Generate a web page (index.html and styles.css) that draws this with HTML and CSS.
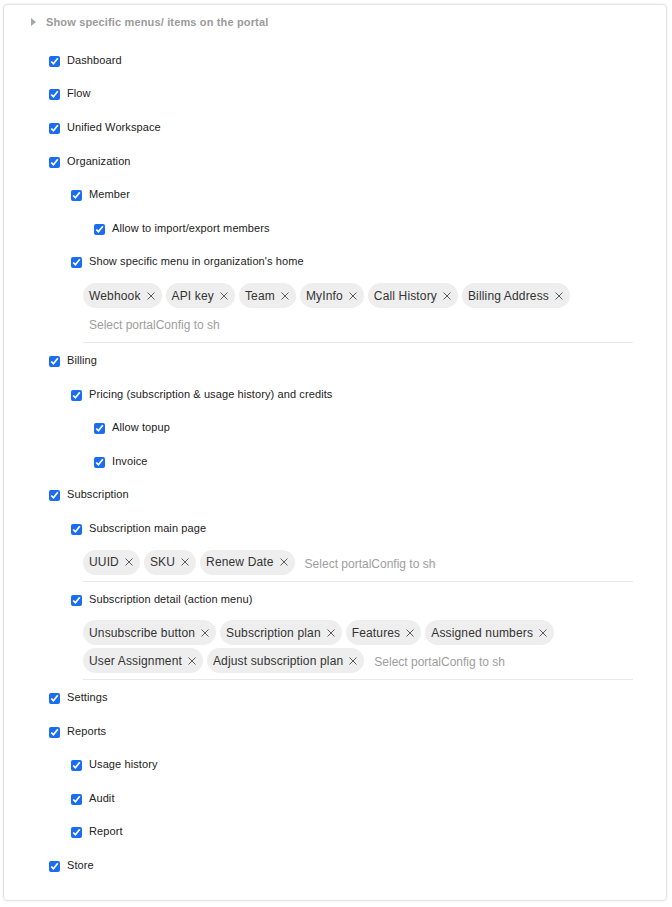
FILE: index.html
```html
<!DOCTYPE html>
<html lang="en">
<head>
  <meta charset="UTF-8">
  <meta name="viewport" content="width=device-width, initial-scale=1.0">
  <title>Portal menus</title>
  <link rel="stylesheet" href="styles.css">
</head>
<body>
<div class="panel">
  <div class="panel-title">
    <svg class="caret" width="5" height="8" viewBox="0 0 5 8"><path d="M0 0 L5 4 L0 8 Z" fill="#a6a6a6"/></svg>
    Show specific menus/ items on the portal
  </div>

  <ul class="menu-tree">
    <li><label class="check"><input type="checkbox" checked>Dashboard</label></li>
    <li><label class="check"><input type="checkbox" checked>Flow</label></li>
    <li><label class="check"><input type="checkbox" checked>Unified Workspace</label></li>
    <li>
      <label class="check"><input type="checkbox" checked>Organization</label>
      <ul class="sub">
        <li>
          <label class="check"><input type="checkbox" checked>Member</label>
          <ul class="sub">
            <li><label class="check"><input type="checkbox" checked>Allow to import/export members</label></li>
          </ul>
        </li>
        <li>
          <label class="check"><input type="checkbox" checked>Show specific menu in organization's home</label>
          <div class="tag-select">
            <span class="tag">Webhook<svg width="8" height="8" viewBox="0 0 8 8"><path d="M0.5 0.5 L7.5 7.5 M7.5 0.5 L0.5 7.5"/></svg></span>
            <span class="tag">API key<svg width="8" height="8" viewBox="0 0 8 8"><path d="M0.5 0.5 L7.5 7.5 M7.5 0.5 L0.5 7.5"/></svg></span>
            <span class="tag">Team<svg width="8" height="8" viewBox="0 0 8 8"><path d="M0.5 0.5 L7.5 7.5 M7.5 0.5 L0.5 7.5"/></svg></span>
            <span class="tag">MyInfo<svg width="8" height="8" viewBox="0 0 8 8"><path d="M0.5 0.5 L7.5 7.5 M7.5 0.5 L0.5 7.5"/></svg></span>
            <span class="tag">Call History<svg width="8" height="8" viewBox="0 0 8 8"><path d="M0.5 0.5 L7.5 7.5 M7.5 0.5 L0.5 7.5"/></svg></span>
            <span class="tag">Billing Address<svg width="8" height="8" viewBox="0 0 8 8"><path d="M0.5 0.5 L7.5 7.5 M7.5 0.5 L0.5 7.5"/></svg></span>
            <input class="tag-input" type="text" placeholder="Select portalConfig to show">
          </div>
        </li>
      </ul>
    </li>
    <li>
      <label class="check"><input type="checkbox" checked>Billing</label>
      <ul class="sub">
        <li>
          <label class="check"><input type="checkbox" checked>Pricing (subscription &amp; usage history) and credits</label>
          <ul class="sub">
            <li><label class="check"><input type="checkbox" checked>Allow topup</label></li>
            <li><label class="check"><input type="checkbox" checked>Invoice</label></li>
          </ul>
        </li>
      </ul>
    </li>
    <li>
      <label class="check"><input type="checkbox" checked>Subscription</label>
      <ul class="sub">
        <li>
          <label class="check"><input type="checkbox" checked>Subscription main page</label>
          <div class="tag-select">
            <span class="tag">UUID<svg width="8" height="8" viewBox="0 0 8 8"><path d="M0.5 0.5 L7.5 7.5 M7.5 0.5 L0.5 7.5"/></svg></span>
            <span class="tag">SKU<svg width="8" height="8" viewBox="0 0 8 8"><path d="M0.5 0.5 L7.5 7.5 M7.5 0.5 L0.5 7.5"/></svg></span>
            <span class="tag">Renew Date<svg width="8" height="8" viewBox="0 0 8 8"><path d="M0.5 0.5 L7.5 7.5 M7.5 0.5 L0.5 7.5"/></svg></span>
            <input class="tag-input" type="text" placeholder="Select portalConfig to show">
          </div>
        </li>
        <li>
          <label class="check"><input type="checkbox" checked>Subscription detail (action menu)</label>
          <div class="tag-select">
            <span class="tag">Unsubscribe button<svg width="8" height="8" viewBox="0 0 8 8"><path d="M0.5 0.5 L7.5 7.5 M7.5 0.5 L0.5 7.5"/></svg></span>
            <span class="tag">Subscription plan<svg width="8" height="8" viewBox="0 0 8 8"><path d="M0.5 0.5 L7.5 7.5 M7.5 0.5 L0.5 7.5"/></svg></span>
            <span class="tag">Features<svg width="8" height="8" viewBox="0 0 8 8"><path d="M0.5 0.5 L7.5 7.5 M7.5 0.5 L0.5 7.5"/></svg></span>
            <span class="tag">Assigned numbers<svg width="8" height="8" viewBox="0 0 8 8"><path d="M0.5 0.5 L7.5 7.5 M7.5 0.5 L0.5 7.5"/></svg></span>
            <span class="tag">User Assignment<svg width="8" height="8" viewBox="0 0 8 8"><path d="M0.5 0.5 L7.5 7.5 M7.5 0.5 L0.5 7.5"/></svg></span>
            <span class="tag">Adjust subscription plan<svg width="8" height="8" viewBox="0 0 8 8"><path d="M0.5 0.5 L7.5 7.5 M7.5 0.5 L0.5 7.5"/></svg></span>
            <input class="tag-input" type="text" placeholder="Select portalConfig to show">
          </div>
        </li>
      </ul>
    </li>
    <li><label class="check"><input type="checkbox" checked>Settings</label></li>
    <li>
      <label class="check"><input type="checkbox" checked>Reports</label>
      <ul class="sub">
        <li><label class="check"><input type="checkbox" checked>Usage history</label></li>
        <li><label class="check"><input type="checkbox" checked>Audit</label></li>
        <li><label class="check"><input type="checkbox" checked>Report</label></li>
      </ul>
    </li>
    <li><label class="check"><input type="checkbox" checked>Store</label></li>
  </ul>
</div>
</body>
</html>
```

FILE: styles.css
```css
body {
  margin: 0;
  background-color: #fff;
  color: #222;
  font-family: "Liberation Sans", Arial, Helvetica, sans-serif;
  font-size: 11px;
  letter-spacing: 0.1px;
}
.panel {
  margin: 4px 5px 6px 3px;
  padding: 9px 33px 18px 45px;
  border: 1px solid #e2e2e2;
  border-radius: 4px;
  box-shadow: 0 0 3px rgba(0, 0, 0, 0.08);
}
.panel-title {
  display: flex;
  align-items: center;
  height: 16px;
  margin-left: -18px;
  color: #9b9b9b;
  font-weight: bold;
  font-size: 11px;
  letter-spacing: 0.15px;
}
.caret {
  margin-right: 10px;
}
.menu-tree,
.sub {
  list-style: none;
  margin: 0;
  padding: 0;
}
.menu-tree {
  margin-top: 13px;
}
.sub {
  margin-left: 22px;
}
.sub .sub {
  margin-left: 23px;
}
.check {
  display: flex;
  align-items: center;
  height: 33.6px;
  cursor: pointer;
}
.check input {
  width: 11px;
  height: 11px;
  margin: 3px 7px 0 0;
  accent-color: #1a6cf0;
}
.tag-select {
  display: flex;
  flex-wrap: wrap;
  gap: 3px 4px;
  margin-left: 12px;
  padding: 5px 0 6px;
  border-bottom: 1px solid #e8e8e8;
}
.tag {
  display: inline-flex;
  align-items: center;
  gap: 6px;
  height: 25px;
  padding: 0 7px 0 6px;
  border-radius: 13px;
  background-color: #eeeeee;
  color: #333;
  font-size: 12px;
  letter-spacing: 0.15px;
}
.tag svg {
  stroke: #5c5c5c;
  stroke-width: 1;
  fill: none;
}
.tag-input {
  box-sizing: border-box;
  width: 137px;
  height: 25px;
  padding: 3px 0 0 6px;
  border: none;
  outline: none;
  background: transparent;
  font-family: inherit;
  font-size: 12px;
  color: #333;
}
.tag-input::placeholder {
  color: #9e9e9e;
}
```
